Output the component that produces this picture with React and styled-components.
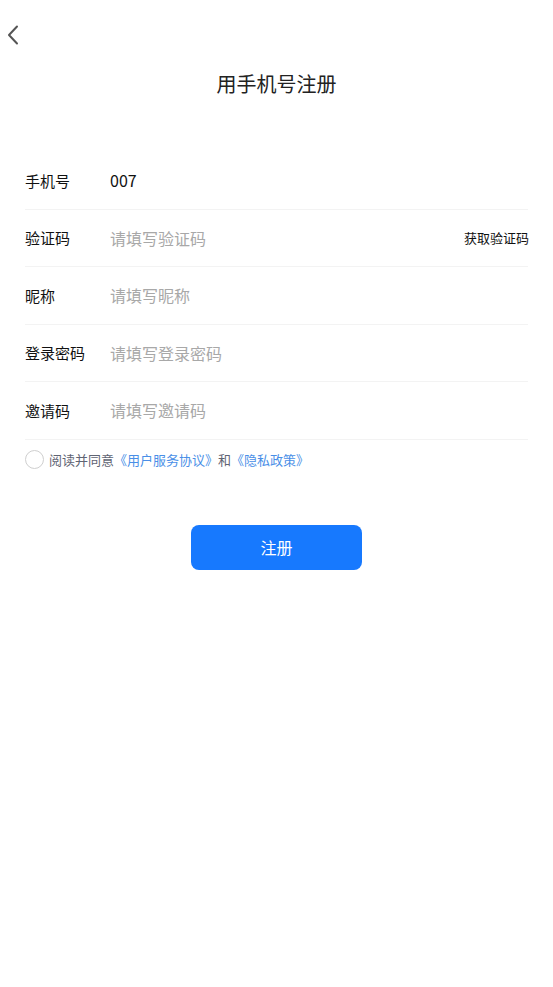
import React, { useState } from 'react';
import styled, { createGlobalStyle } from 'styled-components';

const GlobalStyle = createGlobalStyle`
    html, body {
        margin: 0;
        padding: 0;
        background: #fff;
        font-family: "Noto Sans CJK SC", "Noto Sans", sans-serif;
    }
    * { box-sizing: border-box; }
`;

const Page = styled.div`
    width: 553px;
    min-height: 987px;
    background: #fff;
    display: flex;
    flex-direction: column;
`;

const NavBar = styled.div`
    height: 70px;
    display: flex;
    align-items: center;
    padding-left: 6px;
`;

const BackButton = styled.button`
    border: none;
    background: none;
    padding: 0;
    width: 16px;
    height: 24px;
    display: flex;
    align-items: center;
    cursor: pointer;
`;

const Title = styled.h1`
    margin: 0;
    font-size: 20px;
    font-weight: 400;
    color: #222;
    text-align: center;
    line-height: 28px;
`;

const Form = styled.div`
    margin-top: 54px;
    padding: 0 25px;
    display: flex;
    flex-direction: column;
`;

const Row = styled.div`
    height: 57.5px;
    display: flex;
    align-items: center;
    border-bottom: 1px solid #f3f3f3;
`;

const Label = styled.span`
    width: 85px;
    flex-shrink: 0;
    font-size: 15px;
    color: #111;
`;

const Input = styled.input`
    flex: 1;
    min-width: 0;
    border: none;
    outline: none;
    padding: 0;
    font-family: inherit;
    font-size: 16px;
    color: #111;
    background: transparent;
    &::placeholder {
        color: #a8a8a8;
    }
`;

const CodeButton = styled.span`
    font-size: 13px;
    color: #111;
    margin-right: -1px;
    cursor: pointer;
`;

const Agreement = styled.label`
    display: flex;
    align-items: center;
    gap: 5px;
    height: 40px;
    font-size: 13px;
    color: #5f6473;
`;

const Circle = styled.span`
    width: 19px;
    height: 19px;
    border-radius: 50%;
    border: 1px solid ${props => (props.checked ? '#1677ff' : '#cfcfcf')};
    background: ${props => (props.checked ? '#1677ff' : '#fff')};
    cursor: pointer;
`;

const Link = styled.a`
    color: #4a8fe7;
    text-decoration: none;
`;

const SubmitButton = styled.button`
    align-self: center;
    margin-top: 45px;
    width: 171px;
    height: 45px;
    border: none;
    border-radius: 8px;
    background: #1779fe;
    color: #fff;
    font-family: inherit;
    font-size: 16px;
    cursor: pointer;
`;

const fields = [
    { label: '验证码', placeholder: '请填写验证码', code: true },
    { label: '昵称', placeholder: '请填写昵称' },
    { label: '登录密码', placeholder: '请填写登录密码', type: 'password' },
    { label: '邀请码', placeholder: '请填写邀请码' },
];

export default function App() {
    const [agreed, setAgreed] = useState(false);
    return <Page>
        <GlobalStyle />
        <NavBar>
            <BackButton aria-label="返回">
                <svg width="14" height="22" viewBox="0 0 14 22" fill="none">
                    <path d="M11 2.5 L3 11 L11 19.5" stroke="#555" strokeWidth="2" strokeLinecap="round" strokeLinejoin="round" />
                </svg>
            </BackButton>
        </NavBar>
        <Title>用手机号注册</Title>
        <Form>
            <Row>
                <Label>手机号</Label>
                <Input defaultValue="007" />
            </Row>
            {fields.map(f => (
                <Row key={f.label}>
                    <Label>{f.label}</Label>
                    <Input placeholder={f.placeholder} type={f.type || 'text'} />
                    {f.code && <CodeButton>获取验证码</CodeButton>}
                </Row>
            ))}
            <Agreement>
                <Circle checked={agreed} onClick={() => setAgreed(!agreed)} />
                <span>阅读并同意<Link>《用户服务协议》</Link>和<Link>《隐私政策》</Link></span>
            </Agreement>
            <SubmitButton>注册</SubmitButton>
        </Form>
    </Page>;
}
